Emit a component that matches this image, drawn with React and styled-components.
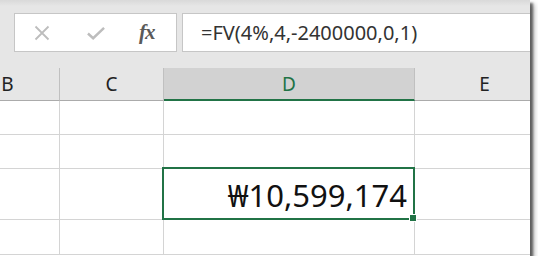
import styled, { createGlobalStyle } from "styled-components";

const Global = createGlobalStyle`
  html, body {
    margin: 0;
    padding: 0;
    background: #ffffff;
  }
  body {
    font-family: "Noto Sans", "Noto Sans CJK KR", sans-serif;
  }
`;

const Frame = styled.div`
  width: 530px;
  height: 256px;
  overflow: hidden;
  background: #ffffff;
  box-shadow: 3px 3px 2px rgba(0, 0, 0, 0.45), 4px 4px 5px rgba(0, 0, 0, 0.35);
  display: flex;
  flex-direction: column;
`;

const FormulaBar = styled.div`
  height: 68px;
  box-sizing: border-box;
  padding: 13px 0 16px 14px;
  display: flex;
  gap: 5px;
  background: linear-gradient(#d9d9d9 0px, #e6e6e6 6px, #e6e6e6 100%);
`;

const ButtonBox = styled.div`
  width: 163px;
  box-sizing: border-box;
  border: 1px solid #c6c6c6;
  background: #ffffff;
  display: flex;
  align-items: center;
  padding-left: 18px;
  gap: 36px;
`;

const BarIcon = styled.span`
  display: flex;
  align-items: center;
  justify-content: center;
  width: 18px;
  height: 18px;
`;

const Fx = styled.span`
  font-family: "Liberation Serif", serif;
  font-style: italic;
  font-weight: bold;
  font-size: 21px;
  color: #5a5a5a;
  margin-left: -2px;
  letter-spacing: -1px;
`;

const FormulaBox = styled.div`
  flex: 1;
  box-sizing: border-box;
  border: 1px solid #c6c6c6;
  border-right: none;
  background: #ffffff;
  display: flex;
  align-items: center;
  padding-left: 18px;
  font-size: 20px;
  color: #333333;
  white-space: nowrap;
`;

const Sheet = styled.div`
  display: grid;
  grid-template-columns: 104px 104px 251px 140px;
  grid-template-rows: 33px 34px 34px 51px 35px;
  margin-left: -44px;
  background: #ffffff;
`;

const Header = styled.div`
  display: flex;
  align-items: center;
  justify-content: center;
  font-size: 19px;
  box-sizing: border-box;
  background: ${(p) => (p.$active ? "#d2d2d2" : "#e6e6e6")};
  color: ${(p) => (p.$active ? "#217346" : "#222222")};
  border-right: 1px solid #c0c0c0;
  border-bottom: ${(p) => (p.$active ? "2px solid #217346" : "1px solid #ababab")};
  padding-top: ${(p) => (p.$active ? "1px" : "0")};
`;

const Cell = styled.div`
  box-sizing: border-box;
  border-right: 1px solid #d4d4d4;
  border-bottom: 1px solid #d4d4d4;
  position: relative;
`;

const Selection = styled.div`
  position: absolute;
  left: -2px;
  top: -2px;
  right: -1px;
  bottom: -1px;
  border: 2px solid #217346;
  box-sizing: border-box;
  display: flex;
  align-items: center;
  justify-content: flex-end;
  padding-right: 6px;
  padding-top: 2px;
  font-size: 31px;
  color: #111111;
  z-index: 1;
`;

const Handle = styled.div`
  position: absolute;
  right: -4px;
  bottom: -4px;
  width: 6px;
  height: 6px;
  background: #217346;
  border: 1px solid #ffffff;
`;

const columns = ["B", "C", "D", "E"];

export default function App() {
  return (
    <>
      <Global />
      <Frame>
        <FormulaBar>
          <ButtonBox>
            <BarIcon>
              <svg width="16" height="16" viewBox="0 0 16 16">
                <path d="M1.5 1.5 L14.5 14.5 M14.5 1.5 L1.5 14.5" stroke="#bdbdbd" strokeWidth="1.8" fill="none" />
              </svg>
            </BarIcon>
            <BarIcon>
              <svg width="19" height="14" viewBox="0 0 19 14">
                <path d="M1 7.5 L6.5 12.5 L18 1.5" stroke="#bdbdbd" strokeWidth="2.6" fill="none" />
              </svg>
            </BarIcon>
            <Fx>fx</Fx>
          </ButtonBox>
          <FormulaBox>=FV(4%,4,-2400000,0,1)</FormulaBox>
        </FormulaBar>
        <Sheet>
          {columns.map((c) => (
            <Header key={c} $active={c === "D"}>
              {c}
            </Header>
          ))}
          {[0, 1, 2, 3].map((r) =>
            columns.map((c) => (
              <Cell key={`${c}${r}`}>
                {r === 2 && c === "D" && (
                  <Selection>
                    ₩10,599,174
                    <Handle />
                  </Selection>
                )}
              </Cell>
            ))
          )}
        </Sheet>
      </Frame>
    </>
  );
}
